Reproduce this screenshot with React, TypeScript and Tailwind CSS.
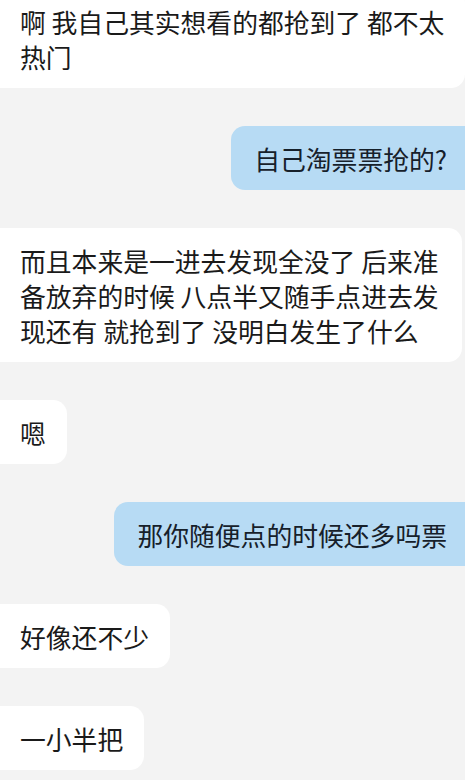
const messages: { side: "left" | "right"; text: string; wide?: boolean }[] = [
  { side: "left", text: "啊 我自己其实想看的都抢到了 都不太热门", wide: true },
  { side: "right", text: "自己淘票票抢的?" },
  { side: "left", text: "而且本来是一进去发现全没了 后来准备放弃的时候 八点半又随手点进去发现还有 就抢到了 没明白发生了什么" },
  { side: "left", text: "嗯" },
  { side: "right", text: "那你随便点的时候还多吗票" },
  { side: "left", text: "好像还不少" },
  { side: "left", text: "一小半把" },
];

function Bubble({ side, text, wide }: { side: "left" | "right"; text: string; wide?: boolean }) {
  if (side === "right") {
    return (
      <div className="flex justify-end">
        <div className="rounded-l-[14px] bg-[#b7dbf4] py-[14.5px] pl-[23px] pr-[18px] text-[#16202a]">
          {text}
        </div>
      </div>
    );
  }
  return (
    <div className="flex justify-start">
      <div
        className={`rounded-r-[14px] bg-white py-[14.5px] pl-5 text-[#1a1a1a] ${
          wide ? "w-full pr-2" : "max-w-[462px] pr-[21px]"
        }`}
      >
        {text}
      </div>
    </div>
  );
}

export default function App() {
  return (
    <div
      className="h-[780px] w-[465px] overflow-hidden bg-[#f3f3f3] text-[25.8px] leading-[35px]"
      style={{ fontFamily: '"Noto Sans CJK SC", "Noto Sans", sans-serif' }}
    >
      <div className="-mt-[11px] flex flex-col gap-[38px]">
        {messages.map((m, i) => (
          <Bubble key={i} side={m.side} text={m.text} wide={m.wide} />
        ))}
      </div>
    </div>
  );
}
